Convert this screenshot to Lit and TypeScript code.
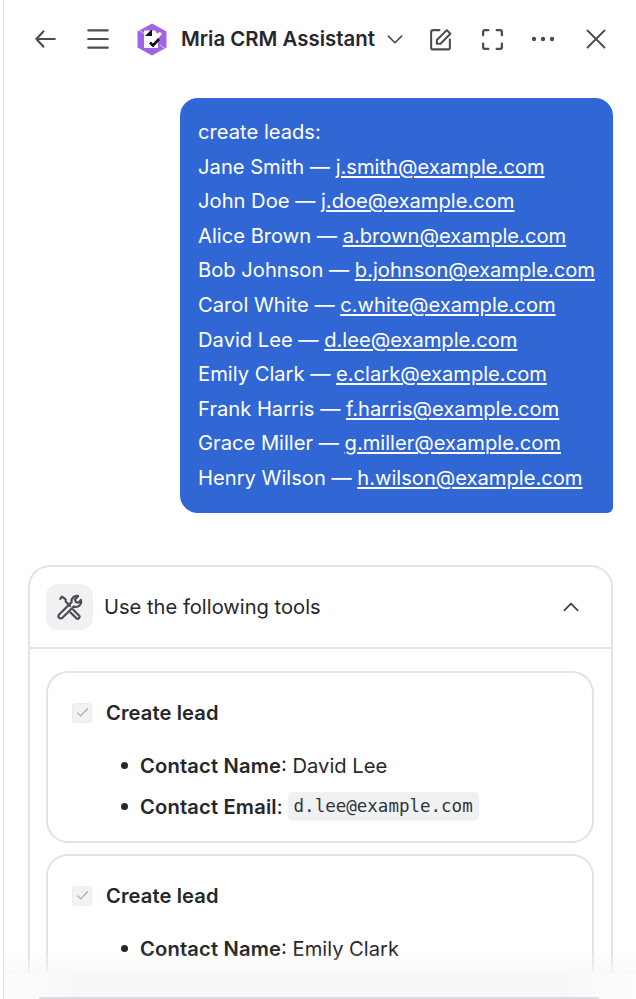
import { LitElement, html, css, svg } from "lit";
import { customElement } from "lit/decorators.js";

const leads = [
  ["Jane Smith", "j.smith@example.com"],
  ["John Doe", "j.doe@example.com"],
  ["Alice Brown", "a.brown@example.com"],
  ["Bob Johnson", "b.johnson@example.com"],
  ["Carol White", "c.white@example.com"],
  ["David Lee", "d.lee@example.com"],
  ["Emily Clark", "e.clark@example.com"],
  ["Frank Harris", "f.harris@example.com"],
  ["Grace Miller", "g.miller@example.com"],
  ["Henry Wilson", "h.wilson@example.com"],
];

const icon = (w: number, body: unknown, sw = 1.9) => html`<svg class="ic" width=${w} height=${w} viewBox="0 0 24 24" fill="none" stroke="currentColor" stroke-width=${sw} stroke-linecap="round" stroke-linejoin="round">${body}</svg>`;

@customElement("app-root")
export class AppRoot extends LitElement {
  static styles = css`
    :host { display: block; width: 636px; height: 999px; position: relative; overflow: hidden; background: #fff; font-family: Inter, "Liberation Sans", sans-serif; color: #26272b; font-size: 20.15px; }
    * { box-sizing: border-box; }
    .frame { height: 999px; margin-left: 3px; border-left: 1px solid #dedfe1; display: flex; flex-direction: column; }
    .head { height: 78px; flex: none; display: flex; align-items: center; padding-left: 28px; color: #4b4d54; }
    .ic { display: block; flex: none; }
    .back { margin-right: 27px; }
    .logo { margin-left: 26px; margin-right: 14px; }
    .title { font-size: 20.4px; font-weight: 600; color: #26272b; white-space: nowrap; position: relative; top: -1px; }
    .chev { margin-left: 10px; }
    .edit { margin-left: 23px; }
    .full { margin-left: 27px; }
    .dots { margin-left: 26px; }
    .close { margin-left: 29px; }
    .body { flex: 1; min-height: 0; overflow: hidden; padding: 20px 23px 0 24px; display: flex; flex-direction: column; align-items: stretch; }
    .bubble { align-self: flex-end; background: #3067d4; color: #fff; border-radius: 18px 18px 6px 18px; padding: 17px 18px 17px; font-size: 20.15px; line-height: 34.6px; white-space: nowrap; }
    .bubble a { color: #fff; text-decoration: underline; text-underline-offset: 2px; text-decoration-thickness: 1.5px; }
    .panel { margin-top: 52px; border: 2px solid #e2e3e5; border-bottom: none; border-radius: 22px 22px 0 0; flex: none; }
    .panel-head { height: 82px; display: flex; align-items: center; padding: 0 16px; border-bottom: 2px solid #e2e3e5; }
    .tools { width: 47px; height: 46px; border-radius: 12px; background: #f0f1f3; color: #4b4d54; display: flex; align-items: center; justify-content: center; margin-right: 11px; }
    .panel-title { flex: 1; color: #26272b; }
    .up { margin-right: 14px; color: #3c3e44; }
    .cards { padding: 22px 17px 0 16px; display: flex; flex-direction: column; gap: 11px; }
    .card { border: 2px solid #e2e3e5; border-radius: 22px; height: 172px; padding: 0 21px; }
    .card-head { display: flex; align-items: center; height: 80px; font-weight: 600; letter-spacing: 0.1px; }
    .check { width: 20px; height: 20px; margin-left: 3px; margin-right: 14px; border-radius: 3px; background: #f2f2f3; border: 1px solid #ececed; color: #a9aaad; display: flex; align-items: center; justify-content: center; }
    ul { list-style: none; margin: -8px 0 0; padding: 0 0 0 71px; }
    li { position: relative; height: 41px; display: flex; align-items: center; white-space: pre; }
    li::before { content: ""; position: absolute; left: -19px; top: 17px; width: 7px; height: 7px; border-radius: 50%; background: #26272b; }
    b { font-weight: 600; letter-spacing: 0.17px; }
    code { font-family: "DejaVu Sans Mono", "Liberation Mono", monospace; font-size: 17.5px; line-height: 21px; background: #f0f1f3; border-radius: 5px; padding: 4px 6px; margin-left: 5px; color: #33343a; }
    .fade { position: absolute; left: 4px; right: 0; bottom: 25px; height: 22px; background: linear-gradient(to bottom, rgba(248,248,248,0), rgba(248,248,248,.85)); pointer-events: none; }
    .foot { flex: none; height: 25px; background: linear-gradient(to right, #fdfdfd, #f8f8f8 12%, #f8f8f8 88%, #fdfdfd); padding: 23px 36px 0 34px; position: relative; z-index: 1; }
    .input { height: 4px; background: #fff; border: 2px solid #dcdcde; border-bottom: none; border-radius: 10px 10px 0 0; }
  `;

  render() {
    const cards: [string, string?][] = [
      ["David Lee", "d.lee@example.com"],
      ["Emily Clark"],
    ];
    return html`
      <div class="frame">
        <header class="head">
          <span class="back">${icon(26, svg`<path d="M21 12H4M10.500 5 4 12l6.500 7"/>`, 2)}</span>
          ${icon(26, svg`<path d="M3 4h18M3 12h18M3 20h18"/>`, 2)}
          <svg class="ic logo" width="30" height="33" viewBox="0 0 30 33">
            <path d="M15 0.500 29.500 8.500V24.500L15 32.500 0.500 24.500V8.500Z" fill="#a263e3"/>
            <path d="M7 7.500h11l2 3 3-1.500 2 2-4 4.500V25H7Z" fill="#fff"/>
            <path d="M8 13 14 7h1v6Z" fill="#111"/>
            <path d="M13 19.500l3 3 6-6.500" fill="none" stroke="#111" stroke-width="2.600"/>
            <path d="M2 7l5 3.500M23 22l5 3.500" stroke="#d9c2f5" stroke-width="1"/>
          </svg>
          <span class="title">Mria CRM Assistant</span>
          <span class="chev">${icon(20, svg`<path d="M4 8.500l8 8 8-8"/>`, 2)}</span>
          <span class="edit">${icon(25, svg`<path d="M11 3H5a2 2 0 0 0-2 2v15a1.500 1.500 0 0 0 1.500 1.500h15A1.500 1.500 0 0 0 21 20v-8"/><path d="M8.500 16v-3.500L18 3l3.500 3.500L12 16Z"/>`, 2)}</span>
          <span class="full">${icon(25, svg`<path d="M3 8V4.500A1.500 1.500 0 0 1 4.500 3H8M16 3h3.500A1.500 1.500 0 0 1 21 4.500V8M21 16v3.500a1.500 1.500 0 0 1-1.500 1.500H16M8 21H4.500A1.500 1.500 0 0 1 3 19.500V16"/>`, 2.200)}</span>
          <span class="dots"><svg class="ic" width="24" height="24" viewBox="0 0 24 24" fill="currentColor"><circle cx="3" cy="12" r="2.200"/><circle cx="12" cy="12" r="2.200"/><circle cx="21" cy="12" r="2.200"/></svg></span>
          <span class="close">${icon(24, svg`<path d="M3.500 3.500l17 17M20.500 3.500l-17 17"/>`, 1.900)}</span>
        </header>
        <div class="body">
          <div class="bubble">
            <div>create leads:</div>
            ${leads.map(([n, e]) => html`<div>${n} — <a>${e}</a></div>`)}
          </div>
          <section class="panel">
            <div class="panel-head">
              <span class="tools">${icon(26, svg`<path d="M3 19.500 14.500 8a4.800 4.800 0 0 1 6-5.500L17.500 5.500l1 2.500 2.500.500 2-2.500a4.800 4.800 0 0 1-6.500 6L6 22.500a2 2 0 0 1-3-3Z" transform="translate(-1 -.5)"/><path d="M3 4.500 4.500 2.500 8 5v2l4 4M15 14.500l5.500 5.500a1.800 1.800 0 0 1-2.500 2.500L12.500 17"/>`, 2)}</span>
              <span class="panel-title">Use the following tools</span>
              <span class="up">${icon(20, svg`<path d="M4 16l8-8 8 8"/>`, 2)}</span>
            </div>
            <div class="cards">
              ${cards.map(([n, e]) => html`
                <div class="card">
                  <div class="card-head">
                    <span class="check">${icon(15, svg`<path d="M4 12.500l5 5L20 6"/>`)}</span>
                    <span>Create lead</span>
                  </div>
                  <ul>
                    <li><b>Contact Name</b>: ${n}</li>
                    ${e ? html`<li><b>Contact Email</b>:<code>${e}</code></li>` : ""}
                  </ul>
                </div>`)}
            </div>
          </section>
        </div>
        <div class="foot"><div class="input"></div></div>
      </div>
      <div class="fade"></div>
    `;
  }
}
